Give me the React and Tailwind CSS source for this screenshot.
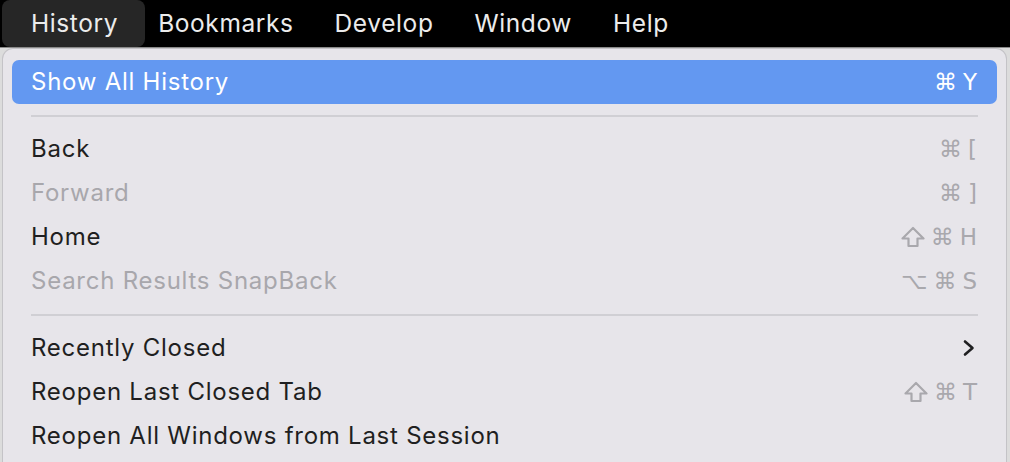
import React from 'react';

const font = { fontFamily: 'Inter, "DejaVu Sans", sans-serif' };

const topMenus = ['History', 'Bookmarks', 'Develop', 'Window', 'Help'];

const groups = [
  [{ label: 'Show All History', keys: ['⌘', 'Y'], active: true }],
  [
    { label: 'Back', keys: ['⌘', '['] },
    { label: 'Forward', keys: ['⌘', ']'], disabled: true },
    { label: 'Home', keys: ['⇧', '⌘', 'H'] },
    { label: 'Search Results SnapBack', keys: ['⌥', '⌘', 'S'], disabled: true },
  ],
  [
    { label: 'Recently Closed', submenu: true },
    { label: 'Reopen Last Closed Tab', keys: ['⇧', '⌘', 'T'] },
    { label: 'Reopen All Windows from Last Session' },
  ],
];

// outlined shift arrow, the font glyph is filled
const ShiftIcon = ({ color }) => (
  <svg width="24" height="22" viewBox="0 0 24 22">
    <path
      d="M12 2 L22.5 12.5 L16.5 12.5 L16.5 20 L7.5 20 L7.5 12.5 L1.5 12.5 Z"
      fill="none"
      stroke={color}
      strokeWidth="2.2"
      strokeLinejoin="round"
    />
  </svg>
);

const Shortcut = ({ keys, active }) => (
  <div className={`flex items-center gap-[6px] text-[23px] ${active ? 'text-white' : 'text-[#a9a8ad]'}`}>
    {keys.map((k, i) =>
      k === '⇧' ? (
        <ShiftIcon key={i} color={active ? '#fff' : '#a9a8ad'} />
      ) : (
        <span key={i} className="leading-none" style={{ fontFamily: '"DejaVu Sans", Inter, sans-serif' }}>
          {k}
        </span>
      )
    )}
  </div>
);

const MenuRow = ({ item }) => {
  const text = item.active ? 'text-white' : item.disabled ? 'text-[#a8a7ac]' : 'text-[#1f1f21]';
  return (
    <div
      className={`h-[44px] flex items-center justify-between pl-[19px] pr-[20px] rounded-[7px] ${
        item.active ? 'bg-[#6398f1]' : ''
      }`}
    >
      <span className={`text-[24px] leading-none tracking-[0.75px] ${text}`}>{item.label}</span>
      {item.keys && <Shortcut keys={item.keys} active={item.active} />}
      {item.submenu && (
        <svg width="14" height="18" viewBox="0 0 14 18" className="mr-[1px]">
          <path d="M3 2.5 L10.5 9 L3 15.5" fill="none" stroke="#1f1f21" strokeWidth="2.6" strokeLinecap="round" strokeLinejoin="round" />
        </svg>
      )}
    </div>
  );
};

export default function App() {
  return (
    <div className="w-[1010px] h-[462px] overflow-hidden bg-[#dcdcdc] flex flex-col" style={font}>
      {/* menu bar */}
      <div className="h-[47px] bg-black flex items-stretch shrink-0">
        {topMenus.map((m, i) => (
          <div
            key={m}
            className={`flex items-center text-[24.5px] tracking-[0.6px] text-[#ececec] ${
              i === 0 ? 'bg-[#262626] rounded-[8px] ml-[2px] pl-[29px] pr-[27px]' : 'pl-[13px] pr-[28px]'
            }`}
          >
            {m}
          </div>
        ))}
      </div>
      <div className="h-px bg-[#8a8a8a] shrink-0" />

      {/* dropdown */}
      <div className="flex-1 flex">
        <div className="ml-[2px] w-[1005px] bg-[#e7e5ea] rounded-t-[11px] border border-b-0 border-[#c4c3c7] px-[9px] pt-[11px]">
          {groups.map((g, gi) => (
            <div key={gi}>
              {gi > 0 && (
                <div className="h-[23px] flex items-center px-[19px]">
                  <div className="h-[2px] w-full bg-[#d0cfd4]" />
                </div>
              )}
              {g.map((item) => (
                <MenuRow key={item.label} item={item} />
              ))}
            </div>
          ))}
        </div>
      </div>
    </div>
  );
}
